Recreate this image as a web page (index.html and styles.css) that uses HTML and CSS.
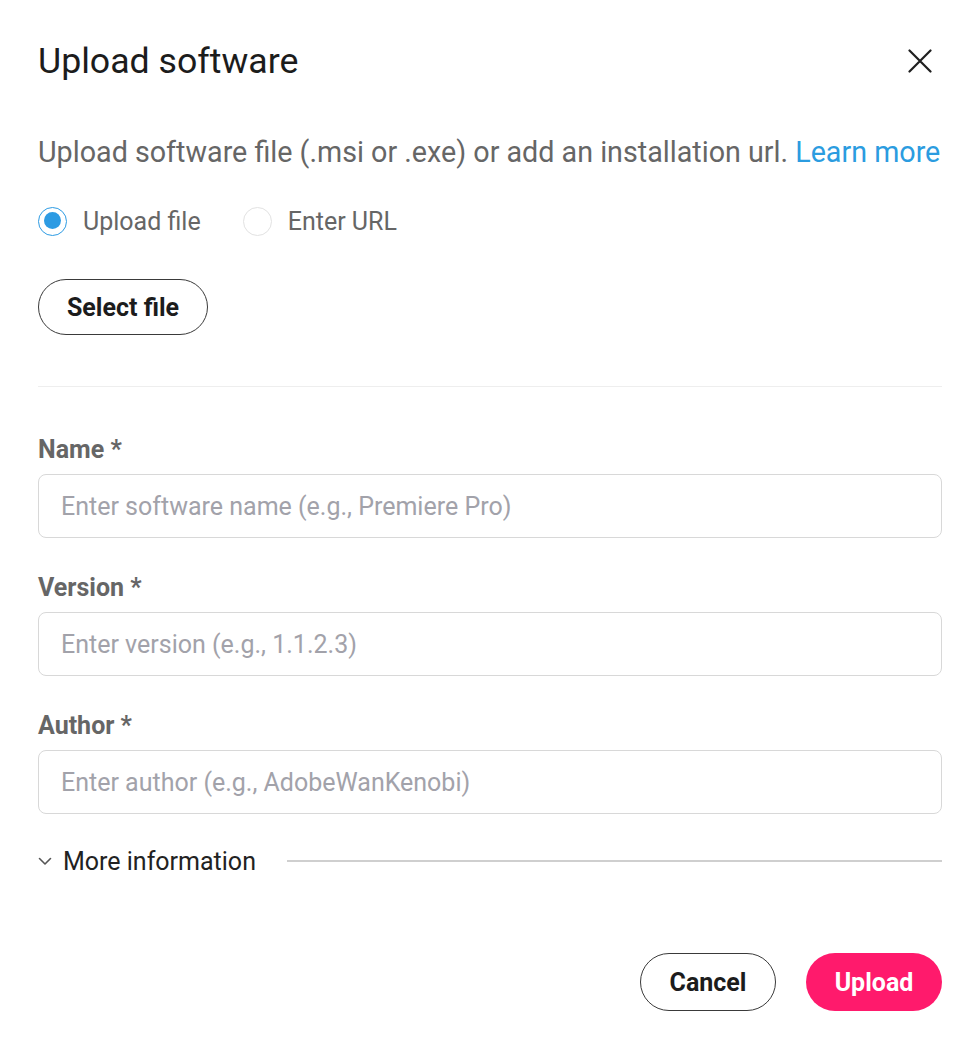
FILE: index.html
```html
<!DOCTYPE html>
<html lang="en">
<head>
<meta charset="utf-8">
<title>Upload software</title>
<link rel="stylesheet" href="styles.css">
</head>
<body>
<div class="dialog">
  <div class="header">
    <h1 class="title">Upload software</h1>
    <button class="close" aria-label="Close">
      <svg width="24" height="24" viewBox="0 0 24 24"><path d="M1.5 1.5 L22.5 22.5 M22.5 1.5 L1.5 22.5" stroke="#1f1f1f" stroke-width="2.2" stroke-linecap="round" fill="none"/></svg>
    </button>
  </div>
  <p class="desc">Upload software file (.msi or .exe) or add an installation url. <a class="link" href="#">Learn more</a></p>
  <div class="radios">
    <label class="radio"><span class="dot checked"></span><span>Upload file</span></label>
    <label class="radio"><span class="dot"></span><span>Enter URL</span></label>
  </div>
  <button class="btn outline select">Select file</button>
  <hr class="divider">
  <div class="fields">
    <div class="field">
      <div class="label">Name *</div>
      <div class="input"><span class="ph">Enter software name (e.g., Premiere Pro)</span></div>
    </div>
    <div class="field">
      <div class="label">Version *</div>
      <div class="input"><span class="ph">Enter version (e.g., 1.1.2.3)</span></div>
    </div>
    <div class="field">
      <div class="label">Author *</div>
      <div class="input"><span class="ph">Enter author (e.g., AdobeWanKenobi)</span></div>
    </div>
  </div>
  <div class="more">
    <svg class="chev" width="14" height="9" viewBox="0 0 14 9"><path d="M1.5 1.5 L7 7 L12.5 1.5" stroke="#555" stroke-width="1.6" fill="none" stroke-linecap="round" stroke-linejoin="round"/></svg>
    <span class="more-text">More information</span>
    <span class="more-line"></span>
  </div>
  <div class="actions">
    <button class="btn outline action">Cancel</button>
    <button class="btn primary action">Upload</button>
  </div>
</div>
</body>
</html>
```
FILE: styles.css
```css
* { box-sizing: border-box; }
html, body { margin: 0; padding: 0; background: #fff; }
body { font-family: Roboto, "Liberation Sans", sans-serif; color: #1f1f1f; }
.dialog { padding: 41px 38px 0 38px; display: flex; flex-direction: column; }
.header { display: flex; align-items: center; justify-content: space-between; height: 40px; }
.title { margin: 0; font-size: 35.7px; font-weight: 400; line-height: 40px; color: #1c1c1c; }
.close { border: 0; background: none; padding: 0; width: 24px; height: 24px; margin-right: 10px; display: flex; }
.desc { margin: 54px 0 0 0; font-size: 28.7px; line-height: 34px; color: #666; white-space: nowrap; }
.link { color: #2b9ce0; text-decoration: none; }
.radios { margin-top: 37px; display: flex; align-items: center; gap: 42px; height: 30px; }
.radio { display: flex; align-items: center; gap: 16px; font-size: 25px; color: #666; }
.dot { width: 29px; height: 29px; border-radius: 50%; border: 1.5px solid #e2e2e2; display: inline-block; position: relative; }
.dot.checked { border-color: #2d9be3; }
.dot.checked::after { content: ""; position: absolute; left: 4.5px; top: 4.5px; width: 17px; height: 17px; border-radius: 50%; background: #2d9be3; }
.btn { font-family: Roboto, "Liberation Sans", sans-serif; font-weight: 700; font-size: 25px; border-radius: 999px; cursor: pointer; display: flex; align-items: center; justify-content: center; }
.outline { background: #fff; border: 1.2px solid #3a3a3a; color: #1c1c1c; }
.primary { background: #ff1a6c; border: 0; color: #fff; }
.select { margin-top: 43px; width: 170px; height: 56px; }
.divider { margin: 51px 0 0 0; border: 0; border-top: 1.5px solid #eeeeee; height: 0; }
.fields { margin-top: 49px; display: flex; flex-direction: column; gap: 36px; }
.field { display: flex; flex-direction: column; }
.label { font-size: 25px; font-weight: 700; line-height: 28px; color: #666; margin-bottom: 10px; }
.input { height: 64px; border: 1.3px solid #d8d8d8; border-radius: 8px; display: flex; align-items: center; padding-left: 22px; }
.ph { font-size: 25px; color: #a2a2aa; }
.more { margin-top: 32px; height: 30px; display: flex; align-items: center; }
.chev { margin-right: 11px; }
.more-text { font-size: 25px; color: #222; }
.more-line { flex: 1; height: 1.5px; background: #cfcfcf; margin-left: 31px; }
.actions { margin-top: 77px; display: flex; justify-content: flex-end; gap: 30px; }
.action { width: 136px; height: 58px; }
```
